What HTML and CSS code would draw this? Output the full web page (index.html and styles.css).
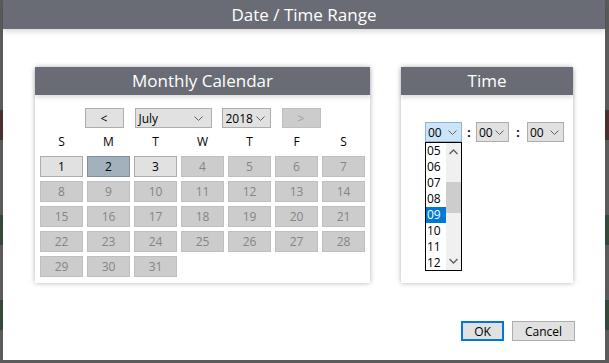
FILE: index.html
```html
<!DOCTYPE html>
<html lang="en">
<head>
    <meta charset="UTF-8">
    <title>Date / Time Range</title>
    <link rel="stylesheet" href="styles.css">
</head>
<body>
    <!-- Dialog -->
    <div class="dialog">
        <div class="dialog-title">Date / Time Range</div>

        <div class="dialog-body">
            <!-- Calendar -->
            <div class="panel calendar">
                <div class="panel-header">Monthly Calendar</div>
                <div class="nav-row">
                    <button class="btn nav-btn">&lt;</button>
                    <div class="select month-select">
                        <span>July</span>
                        <svg width="9" height="5" viewBox="0 0 9 5"><path d="M0.5 0.5 L4.5 4.5 L8.5 0.5" fill="none" stroke="#606060" stroke-width="1"/></svg>
                    </div>
                    <div class="select year-select">
                        <span>2018</span>
                        <svg width="9" height="5" viewBox="0 0 9 5"><path d="M0.5 0.5 L4.5 4.5 L8.5 0.5" fill="none" stroke="#606060" stroke-width="1"/></svg>
                    </div>
                    <button class="btn nav-btn disabled">&gt;</button>
                </div>
                <div class="weekdays">
                    <span>S</span><span>M</span><span>T</span><span>W</span><span>T</span><span>F</span><span>S</span>
                </div>
                <div class="days" id="days"></div>
            </div>

            <!-- Time -->
            <div class="panel time">
                <div class="panel-header">Time</div>
                <div class="time-row">
                    <div class="hour-wrap">
                        <div class="select time-select focused">
                            <span>00</span>
                            <svg width="9" height="5" viewBox="0 0 9 5"><path d="M0.5 0.5 L4.5 4.5 L8.5 0.5" fill="none" stroke="#606060" stroke-width="1"/></svg>
                        </div>
                        <div class="hour-list">
                            <ul class="hour-items" id="hours"></ul>
                            <div class="scrollbar">
                                <svg class="arrow" width="9" height="6" viewBox="0 0 9 6"><path d="M0.5 5 L4.5 1 L8.5 5" fill="none" stroke="#606060" stroke-width="1.4"/></svg>
                                <div class="track"><div class="thumb"></div></div>
                                <svg class="arrow" width="9" height="6" viewBox="0 0 9 6"><path d="M0.5 1 L4.5 5 L8.5 1" fill="none" stroke="#606060" stroke-width="1.4"/></svg>
                            </div>
                        </div>
                    </div>
                    <span class="colon">:</span>
                    <div class="select time-select min-select">
                        <span>00</span>
                        <svg width="9" height="5" viewBox="0 0 9 5"><path d="M0.5 0.5 L4.5 4.5 L8.5 0.5" fill="none" stroke="#606060" stroke-width="1"/></svg>
                    </div>
                    <span class="colon wide">:</span>
                    <div class="select time-select">
                        <span>00</span>
                        <svg width="9" height="5" viewBox="0 0 9 5"><path d="M0.5 0.5 L4.5 4.5 L8.5 0.5" fill="none" stroke="#606060" stroke-width="1"/></svg>
                    </div>
                </div>
            </div>
        </div>

        <!-- Buttons -->
        <div class="dialog-buttons">
            <button class="btn ok-btn">OK</button>
            <button class="btn cancel-btn">Cancel</button>
        </div>
    </div>

    <script>
        // days of July 2018 (starts on Sunday)
        const daysBox = document.getElementById('days');
        for (let d = 1; d <= 31; d++) {
            const cell = document.createElement('div');
            cell.classList.add('day');
            if (d === 2) cell.classList.add('selected');
            else if (d > 3) cell.classList.add('disabled');
            cell.textContent = d;
            daysBox.appendChild(cell);
        }

        // visible hours in the open list
        const hoursBox = document.getElementById('hours');
        for (let h = 5; h <= 12; h++) {
            const item = document.createElement('li');
            item.textContent = String(h).padStart(2, '0');
            if (h === 9) item.classList.add('active');
            hoursBox.appendChild(item);
        }
    </script>
</body>
</html>
```

FILE: styles.css
```css
/* Reset */
* {
    margin: 0;
    padding: 0;
    box-sizing: border-box;
}

body {
    font-family: 'Open Sans', 'Noto Sans', sans-serif;
    font-size: 12px;
    color: #000;
    background: linear-gradient(to bottom,
        #5b5b5b 0 110px, #4a3030 110px 140px, #5b5b5b 140px 215px,
        #34493a 215px 245px, #5b5b5b 245px 300px, #34493a 300px 330px, #5b5b5b 330px);
    width: 609px;
    height: 363px;
    overflow: hidden;
}

/* Dialog */
.dialog {
    margin-left: 3px;
    width: 602px;
    height: 360px;
    background-color: #fff;
}

.dialog-title {
    height: 29px;
    line-height: 29px;
    background-color: #696c74;
    color: #fff;
    font-size: 17px;
    text-align: center;
    box-shadow: 0 3px 5px rgba(0, 0, 0, 0.14);
    position: relative;
}

.dialog-body {
    display: flex;
    gap: 31px;
    padding: 38px 32px 0;
}

/* Panels */
.panel {
    height: 216px;
    background-color: #fff;
    box-shadow: 0 0 5px rgba(0, 0, 0, 0.3);
}

.calendar {
    width: 335px;
}

.time {
    width: 172px;
}

.panel-header {
    height: 28px;
    line-height: 28px;
    background-color: #696c74;
    color: #fff;
    font-size: 17px;
    text-align: center;
    box-shadow: 0 3px 4px rgba(0, 0, 0, 0.12);
    position: relative;
}

/* Buttons and selects */
.btn {
    font-family: inherit;
    font-size: 12px;
    height: 20px;
    background-color: #e1e1e1;
    border: 1px solid #adadad;
    color: #000;
}

.select {
    display: flex;
    align-items: center;
    justify-content: space-between;
    height: 20px;
    padding: 0 5px 0 3px;
    background-color: #e1e1e1;
    border: 1px solid #adadad;
}

.select svg {
    flex-shrink: 0;
}

/* Calendar navigation */
.nav-row {
    display: flex;
    justify-content: center;
    margin-top: 13px;
}

.nav-btn {
    width: 39px;
}

.nav-btn.disabled {
    background-color: #cccccc;
    border-color: #bfbfbf;
    color: #a0a0a0;
}

.month-select {
    width: 77px;
    margin: 0 10px 0 11px;
    padding-right: 8px;
}

.year-select {
    width: 49px;
    margin-right: 11px;
}

.weekdays,
.days {
    display: grid;
    grid-template-columns: repeat(7, 43px);
    column-gap: 4px;
    padding: 0 5px;
}

.weekdays span {
    height: 28px;
    line-height: 28px;
    text-align: center;
}

.days {
    grid-auto-rows: 21px;
    row-gap: 4px;
}

.day {
    line-height: 19px;
    text-align: center;
    background-color: #e1e1e1;
    border: 1px solid #adadad;
}

.day.selected {
    background-color: #a3b1bc;
    border-color: #7f8f9c;
}

.day.disabled {
    background-color: #cccccc;
    border-color: #bfbfbf;
    color: #858585;
}

/* Time */
.time-row {
    display: flex;
    align-items: center;
    margin-top: 27px;
    padding-left: 24px;
}

.hour-wrap {
    position: relative;
}

.time-select {
    width: 37px;
    padding: 0 4px 0 2px;
}

.min-select {
    width: 33px;
}

.time-select.focused {
    background-color: #cce4f7;
    border-color: #8db5d8;
}

.colon {
    width: 14px;
    text-align: center;
    font-weight: bold;
}

.colon.wide {
    width: 18px;
}

.hour-list {
    position: absolute;
    top: 20px;
    left: 0;
    width: 37px;
    height: 129px;
    display: flex;
    background-color: #fff;
    border: 1px solid #000;
}

.hour-items {
    list-style: none;
    width: 20px;
}

.hour-items li {
    height: 16px;
    line-height: 16px;
    padding-left: 1px;
}

.hour-items li.active {
    background-color: #0078d7;
    color: #fff;
}

.scrollbar {
    width: 15px;
    display: flex;
    flex-direction: column;
    align-items: center;
    background-color: #f0f0f0;
}

.scrollbar .arrow {
    margin: 6px 0;
}

.track {
    flex: 1;
    width: 100%;
}

.thumb {
    margin-top: 21px;
    height: 31px;
    background-color: #cdcdcd;
}

/* Dialog buttons */
.dialog-buttons {
    display: flex;
    justify-content: flex-end;
    gap: 8px;
    margin-top: 38px;
    padding-right: 30px;
}

.ok-btn {
    width: 43px;
    border: 2px solid #0078d7;
}

.cancel-btn {
    width: 63px;
}
```
